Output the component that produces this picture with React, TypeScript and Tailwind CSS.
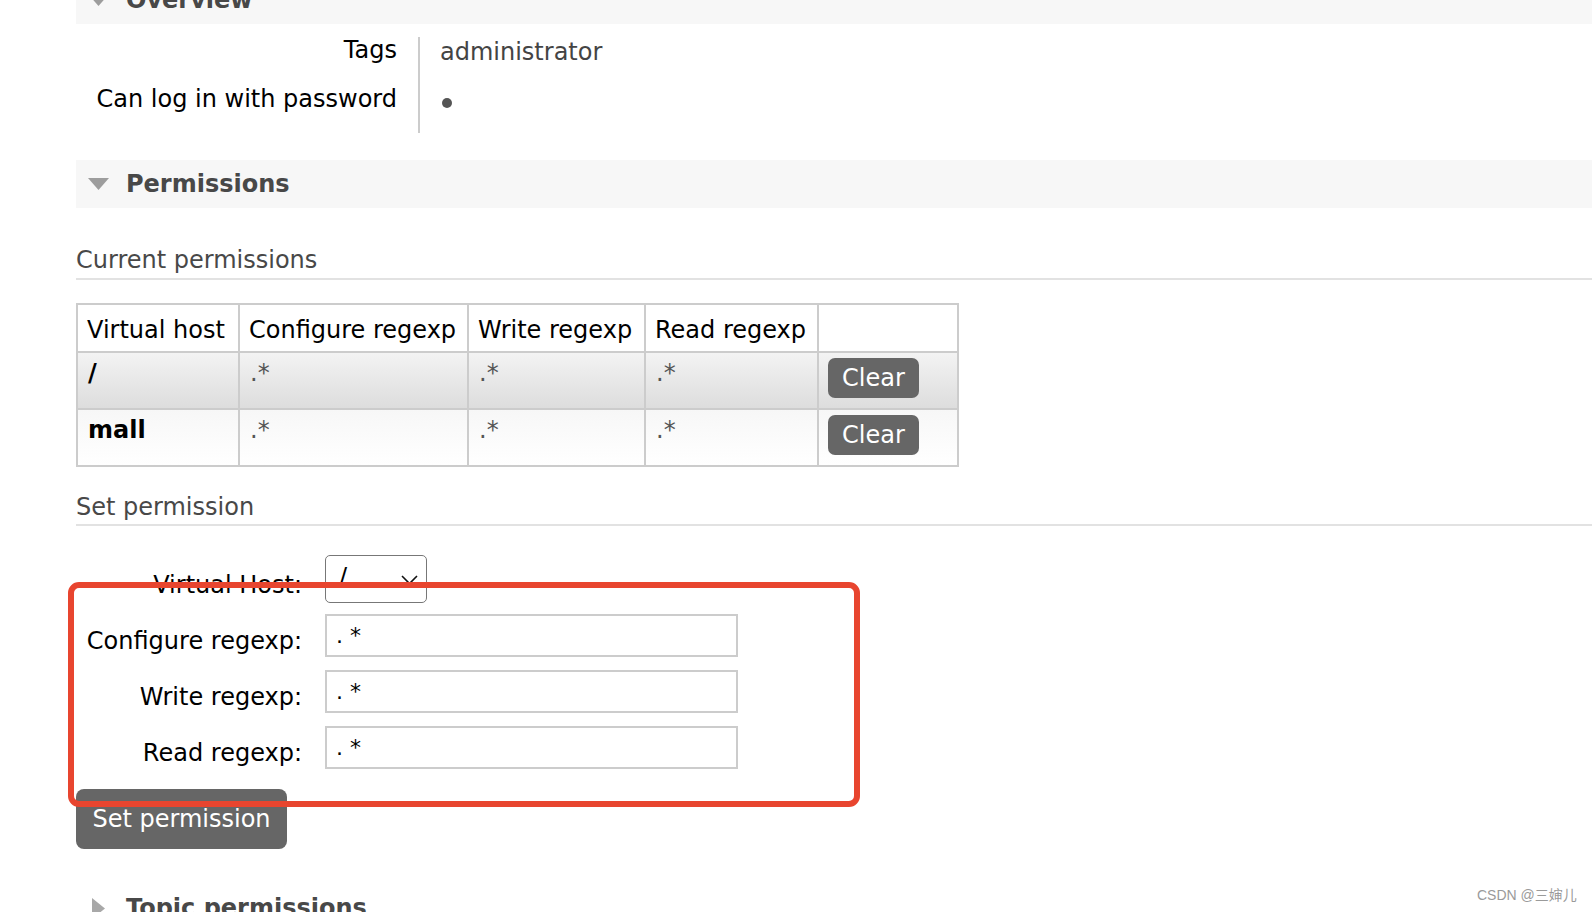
import React from "react";

function SectionBar({ title, open, className = "" }: { title: string; open: boolean; className?: string }) {
  return (
    <div className={`flex h-[48px] items-center ${className}`}>
      {open ? (
        <div className="ml-[12px] flex w-[21px] justify-center">
          <svg width="21" height="12" viewBox="0 0 21 12">
            <polygon points="0,0 21,0 10.5,12" fill="#9d9d9d" />
          </svg>
        </div>
      ) : (
        <div className="ml-[12px] flex w-[21px] justify-center">
          <svg width="13" height="21" viewBox="0 0 13 21">
            <polygon points="0,0 13,10.5 0,21" fill="#a8a8a8" />
          </svg>
        </div>
      )}
      <h2 className="ml-[17px] text-[24px] font-bold leading-[28px] text-[#484848]">{title}</h2>
    </div>
  );
}

const cell = "border-r-2 border-b-2 border-[#cccccc]";

function PermRow({ vhost, first }: { vhost: string; first: boolean }) {
  const bg = first
    ? "bg-linear-to-b from-[#f3f3f3] to-[#dddddd]"
    : "bg-linear-to-b from-[#f7f7f7] to-[#ffffff]";
  return (
    <>
      <div className={`${cell} ${bg} h-[57px] px-[10px] pt-[6px] font-bold leading-[28px] text-black`}>{vhost}</div>
      <div className={`${cell} ${bg} h-[57px] px-[10px] pt-[6px] leading-[28px] text-[#555]`}>.*</div>
      <div className={`${cell} ${bg} h-[57px] px-[10px] pt-[6px] leading-[28px] text-[#555]`}>.*</div>
      <div className={`${cell} ${bg} h-[57px] px-[10px] pt-[6px] leading-[28px] text-[#555]`}>.*</div>
      <div className={`${cell} ${bg} h-[57px] pl-[9px] pt-[5px]`}>
        <button className="h-[40px] w-[91px] rounded-[7px] bg-[#666666] text-center text-[24px] leading-[40px] text-white">
          Clear
        </button>
      </div>
    </>
  );
}

function FormRow({ label, children }: { label: string; children: React.ReactNode }) {
  return (
    <div className="flex h-[56px] items-center">
      <label className="w-[226px] pt-[12px] text-right leading-[28px] text-black">{label}</label>
      <div className="ml-[23px]">{children}</div>
    </div>
  );
}

function RegexInput() {
  return (
    <input
      readOnly
      defaultValue=".*"
      className="block h-[43px] w-[413px] border-2 border-[#cccccc] bg-white pl-[9px] font-['DejaVu_Sans',sans-serif] text-[22px] tracking-[7px] text-black outline-none"
    />
  );
}

export default function App() {
  return (
    <div className="relative h-[912px] w-[1592px] overflow-hidden bg-white font-['DejaVu_Sans',sans-serif] text-[24px] text-black">
      <div className="pl-[76px]">
        <SectionBar title="Overview" open className="-mt-[24px] bg-[#f7f7f7]" />

        <div className="mt-[13px] flex">
          <div className="w-[342px] pr-[21px] pt-[1px] text-right leading-[24px]">
            <div className="h-[48.5px]">Tags</div>
            <div className="h-[48.5px]">Can log in with password</div>
          </div>
          <div className="h-[96px] border-l-2 border-[#cccccc] pl-[20px] pt-[3px] leading-[24px] text-[#444]">
            <div className="h-[48.5px]">administrator</div>
            <div className="h-[45.5px]">
              <div className="ml-[2px] mt-[9px] h-[10px] w-[10px] rounded-full bg-[#555]" />
            </div>
          </div>
        </div>

        <SectionBar title="Permissions" open className="mt-[25px] bg-[#f7f7f7]" />

        <h3 className="mt-[38px] border-b-2 border-[#e2e2e2] pb-[4px] leading-[28px] text-[#484848]">
          Current permissions
        </h3>

        <div className="mt-[23px] grid w-fit grid-cols-[162px_229px_177px_173px_140px] border-l-2 border-t-2 border-[#cccccc]">
          {["Virtual host", "Configure regexp", "Write regexp", "Read regexp", ""].map((h, i) => (
            <div key={i} className={`${cell} flex h-[48px] items-center bg-white px-[9px] pt-[3px] leading-[28px] text-black`}>
              {h}
            </div>
          ))}
          <PermRow vhost="/" first />
          <PermRow vhost="mall" first={false} />
        </div>

        <h3 className="mt-[26px] border-b-2 border-[#e2e2e2] pb-[3px] leading-[28px] text-[#484848]">
          Set permission
        </h3>

        <div className="mt-[25px]">
          <FormRow label="Virtual Host:">
            <div className="flex h-[48px] w-[102px] items-center justify-between rounded-[5px] border-[1.5px] border-[#777] bg-white pl-[13px] pr-[8px]">
              <span className="-mt-[4px] leading-[28px]">/</span>
              <svg width="17" height="10" viewBox="0 0 17 10" className="mt-[2px]">
                <polyline points="1,1 8.5,8.5 16,1" fill="none" stroke="#111" strokeWidth="1.6" />
              </svg>
            </div>
          </FormRow>
          <FormRow label="Configure regexp:">
            <RegexInput />
          </FormRow>
          <FormRow label="Write regexp:">
            <RegexInput />
          </FormRow>
          <FormRow label="Read regexp:">
            <RegexInput />
          </FormRow>
        </div>

        <button className="mt-[14px] h-[60px] w-[211px] rounded-[8px] bg-[#666666] text-center text-[24px] leading-[28px] text-white">
          Set permission
        </button>

        <SectionBar title="Topic permissions" open={false} className="mt-[35px] bg-white" />
      </div>

      <div className="pointer-events-none absolute left-[68px] top-[582px] h-[225px] w-[792px] rounded-[11px] border-[6px] border-[#e8452f]" />

      <div className="absolute left-[1477px] top-[887px] font-['Liberation_Sans','Noto_Sans_CJK_SC',sans-serif] text-[14px] leading-[16px] text-[#9a9a9a]">
        CSDN @三婶儿
      </div>
    </div>
  );
}
